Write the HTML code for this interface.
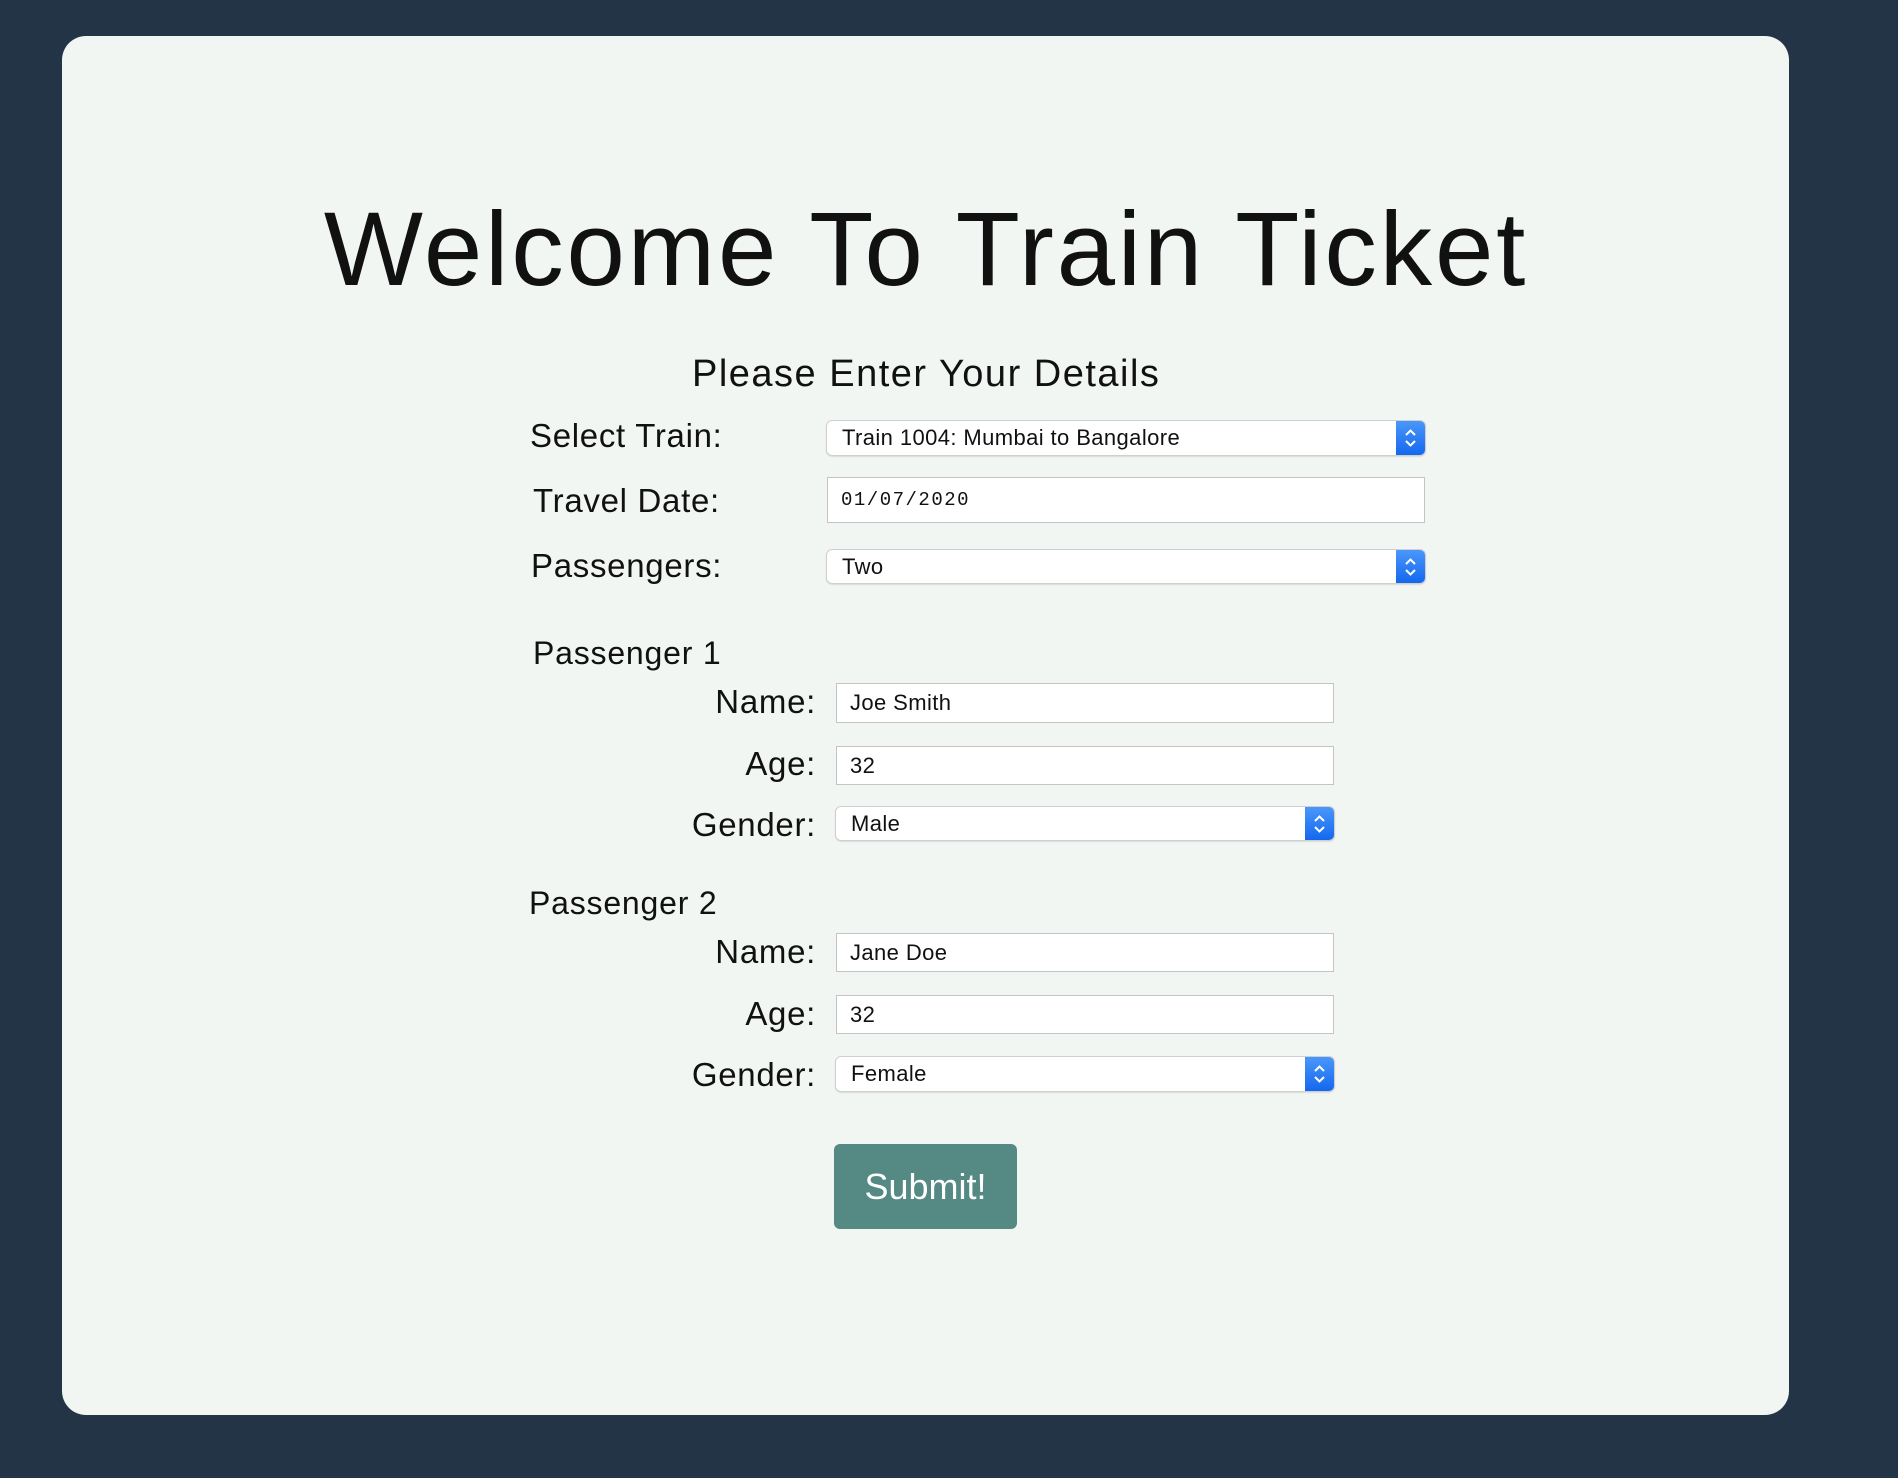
<!DOCTYPE html>
<html><head><meta charset="utf-8"><style>
*{margin:0;padding:0;box-sizing:border-box}
body{width:1898px;height:1478px;background:#243447;position:relative;font-family:"Liberation Sans",sans-serif;color:#111;overflow:hidden}
.card{position:absolute;left:62px;top:36px;width:1727px;height:1379px;background:#f2f6f3;border-radius:24px}
.t{position:absolute;white-space:nowrap}
.lbl{font-size:33px;line-height:1;letter-spacing:0.7px}
.in{position:absolute;background:#fff;border:1px solid #c4c4c4;font-size:22px;padding-left:13px;display:flex;align-items:center;letter-spacing:0.4px}
.sel{position:absolute;background:#fff;border-radius:5px;box-shadow:0 0 0 1px #cfcfcf,0 1px 2px rgba(0,0,0,.25);font-size:22px;padding-left:15px;display:flex;align-items:center;letter-spacing:0.4px}
.arr{position:absolute;right:0;top:0;bottom:0;width:29px;background:linear-gradient(#4a97fb,#1468ee);border-radius:0 5px 5px 0}
.arr svg{position:absolute;left:7px;top:50%;margin-top:-10px}
</style></head><body>
<div class="card"></div>
<div class="t" style="left:0;width:1852px;text-align:center;top:197px;font-size:105px;letter-spacing:2.8px;line-height:1">Welcome To Train Ticket</div>
<div class="t" style="left:692px;top:355px;font-size:38px;line-height:1;letter-spacing:1.5px">Please Enter Your Details</div>

<div class="t lbl" style="left:530px;top:419px">Select Train:</div>
<div class="sel" style="left:827px;top:421px;width:598px;height:34px">Train 1004: Mumbai to Bangalore<div class="arr"><svg width="15" height="20" viewBox="0 0 15 20"><path d="M3 7L7.5 2.5L12 7M3 13L7.5 17.5L12 13" stroke="#fff" stroke-width="2" fill="none"/></svg></div></div>

<div class="t lbl" style="left:533px;top:484px">Travel Date:</div>
<div class="in" style="left:827px;top:477px;width:598px;height:46px;font-family:'Liberation Mono',monospace;font-size:19px;letter-spacing:1.5px">01/07/2020</div>

<div class="t lbl" style="left:531px;top:549px">Passengers:</div>
<div class="sel" style="left:827px;top:550px;width:598px;height:33px">Two<div class="arr"><svg width="15" height="20" viewBox="0 0 15 20"><path d="M3 7L7.5 2.5L12 7M3 13L7.5 17.5L12 13" stroke="#fff" stroke-width="2" fill="none"/></svg></div></div>

<div class="t" style="left:533px;top:637px;font-size:32px;line-height:1;letter-spacing:0.8px">Passenger 1</div>
<div class="t lbl" style="right:1082px;top:685px">Name:</div>
<div class="in" style="left:836px;top:683px;width:498px;height:40px">Joe Smith</div>
<div class="t lbl" style="right:1082px;top:747px">Age:</div>
<div class="in" style="left:836px;top:746px;width:498px;height:39px">32</div>
<div class="t lbl" style="right:1082px;top:808px">Gender:</div>
<div class="sel" style="left:836px;top:807px;width:498px;height:33px">Male<div class="arr"><svg width="15" height="20" viewBox="0 0 15 20"><path d="M3 7L7.5 2.5L12 7M3 13L7.5 17.5L12 13" stroke="#fff" stroke-width="2" fill="none"/></svg></div></div>

<div class="t" style="left:529px;top:887px;font-size:32px;line-height:1;letter-spacing:0.8px">Passenger 2</div>
<div class="t lbl" style="right:1082px;top:935px">Name:</div>
<div class="in" style="left:836px;top:933px;width:498px;height:39px">Jane Doe</div>
<div class="t lbl" style="right:1082px;top:997px">Age:</div>
<div class="in" style="left:836px;top:995px;width:498px;height:39px">32</div>
<div class="t lbl" style="right:1082px;top:1058px">Gender:</div>
<div class="sel" style="left:836px;top:1057px;width:498px;height:34px">Female<div class="arr"><svg width="15" height="20" viewBox="0 0 15 20"><path d="M3 7L7.5 2.5L12 7M3 13L7.5 17.5L12 13" stroke="#fff" stroke-width="2" fill="none"/></svg></div></div>

<div style="position:absolute;left:834px;top:1144px;width:183px;height:85px;background:#558983;border-radius:6px;color:#fff;font-size:36px;display:flex;align-items:center;justify-content:center">Submit!</div>
</body></html>
